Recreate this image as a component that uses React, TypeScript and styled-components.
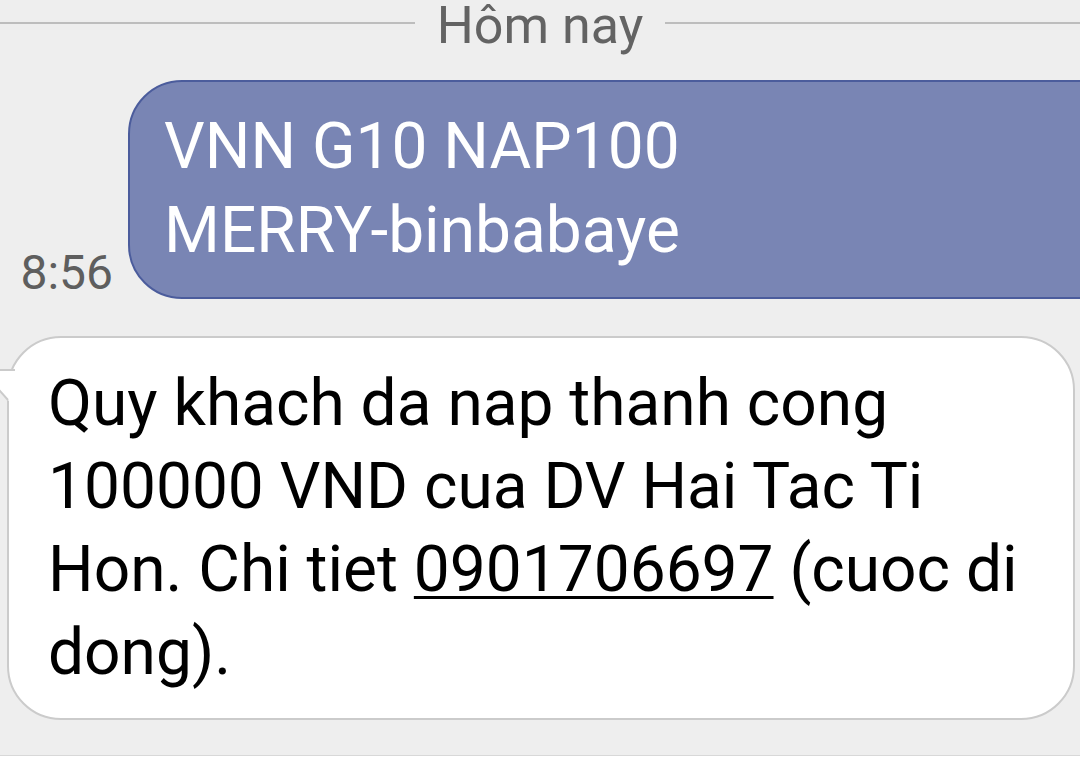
import React from "react";
import styled, { createGlobalStyle } from "styled-components";

const GlobalStyle = createGlobalStyle`
  html, body {
    margin: 0;
    padding: 0;
    overflow: hidden;
    background: #ffffff;
  }
  body {
    font-family: Roboto, "Noto Sans", "Liberation Sans", sans-serif;
  }
`;

const Screen = styled.div`
  width: 1080px;
  height: 783px;
  display: flex;
  flex-direction: column;
  overflow: hidden;
`;

const Thread = styled.div`
  height: 756px;
  background: #eeeeee;
  display: flex;
  flex-direction: column;
  border-bottom: 1px solid #d8d8d8;
  box-sizing: border-box;
`;

const InputBar = styled.div`
  flex: 1;
  background: #ffffff;
`;

const DateHeader = styled.div`
  display: flex;
  align-items: flex-start;
  gap: 22px;
  height: 52px;
`;

const DateLine = styled.div`
  flex: 1;
  height: 2px;
  margin-top: 22px;
  background: #bdbdbd;
`;

const DateLabel = styled.span`
  font-size: 52px;
  line-height: 52px;
  color: #636363;
  white-space: nowrap;
`;

const OutgoingRow = styled.div`
  display: grid;
  grid-template-columns: 128px 1fr;
  align-items: end;
  margin-top: 28px;
`;

const Time = styled.span`
  justify-self: end;
  padding-right: 15px;
  margin-bottom: 2px;
  font-size: 48px;
  line-height: 48px;
  color: #5e5e5e;
`;

const OutgoingBubble = styled.div`
  margin-right: -40px;
  background: #7985b4;
  border: 2px solid #4b5c9c;
  border-radius: 54px 0 0 54px;
  padding: 23px 40px 24px 34px;
  color: #ffffff;
  font-size: 64px;
  line-height: 84px;
`;

const IncomingBubble = styled.div`
  position: relative;
  margin: 37px 5px 0 7px;
  background: #ffffff;
  border: 2px solid #cbcbcb;
  border-radius: 54px;
  padding: 24px 20px 24px 39px;
  color: #000000;
  font-size: 64px;
  line-height: 83px;
`;

const Tail = styled.svg`
  position: absolute;
  left: -29px;
  top: 31px;
  overflow: visible;
`;

const PhoneLink = styled.span`
  text-decoration: underline;
  text-decoration-thickness: 3px;
  text-underline-offset: 5px;
`;

export default function App() {
  return (
    <>
      <GlobalStyle />
      <Screen>
        <Thread>
          <DateHeader>
            <DateLine />
            <DateLabel>Hôm nay</DateLabel>
            <DateLine />
          </DateHeader>
          <OutgoingRow>
            <Time>8:56</Time>
            <OutgoingBubble>
              VNN G10 NAP100
              <br />
              MERRY-binbabaye
            </OutgoingBubble>
          </OutgoingRow>
          <IncomingBubble>
            <Tail width="36" height="36" viewBox="0 0 36 36">
              <polygon points="0,1 35,1 35,34 27,31" fill="#ffffff" />
              <polyline
                points="35,1 1,1 28,31"
                fill="none"
                stroke="#cbcbcb"
                strokeWidth="2"
              />
            </Tail>
            Quy khach da nap thanh cong
            <br />
            100000 VND cua DV Hai Tac Ti
            <br />
            Hon. Chi tiet <PhoneLink>0901706697</PhoneLink> (cuoc di
            <br />
            dong).
          </IncomingBubble>
        </Thread>
        <InputBar />
      </Screen>
    </>
  );
}
